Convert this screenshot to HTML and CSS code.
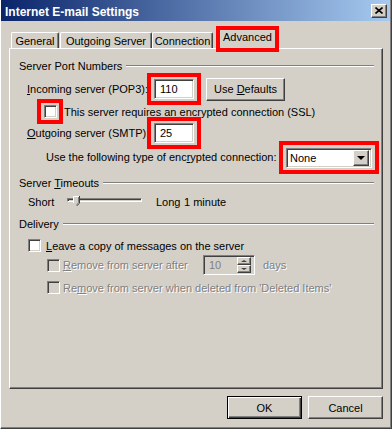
FILE: index.html
```html
<!DOCTYPE html>
<html lang="en">
<head>
    <meta charset="UTF-8">
    <title>Internet E-mail Settings</title>
    <link rel="stylesheet" href="styles.css">
</head>
<body>
    <div class="window">
        <div class="titlebar">
            <span class="title">Internet E-mail Settings</span>
            <button class="btn close-btn">
                <svg width="8" height="7" viewBox="0 0 8 7"><path d="M0.5 0.5 L7.5 6.5 M7.5 0.5 L0.5 6.5" stroke="#000" stroke-width="1.6" fill="none"/></svg>
            </button>
        </div>
        <div class="dialog">
            <div class="tabs">
                <div class="tab tab-general">General</div>
                <div class="tab tab-outgoing">Outgoing Server</div>
                <div class="tab tab-connection">Connection</div>
                <div class="tab tab-active">Advanced</div>
            </div>
            <div class="panel">
                <div class="group-head"><span>Server Port Numbers</span><span class="rule"></span></div>

                <div class="row row-port row-incoming">
                    <span class="lbl lbl-port"><u>I</u>ncoming server (POP3):</span>
                    <span class="mark mark-field"><span class="field">110</span></span>
                    <button class="btn btn-defaults"><span>Use <u>D</u>efaults</span></button>
                </div>

                <div class="row row-ssl">
                    <span class="mark mark-check"><span class="check"></span></span>
                    <span class="ssl-text">This server requires an encrypted connection (SSL)</span>
                </div>

                <div class="row row-port row-outgoing">
                    <span class="lbl lbl-port"><u>O</u>utgoing server (SMTP):</span>
                    <span class="mark mark-field"><span class="field">25</span></span>
                </div>

                <div class="row row-encrypt">
                    <span class="lbl lbl-encrypt">Use the following type of enc<u>r</u>ypted connection:</span>
                    <span class="mark mark-select">
                        <span class="select">
                            <span class="select-value">None</span>
                            <span class="btn drop-btn"><span class="arrow-down"></span></span>
                        </span>
                    </span>
                </div>

                <div class="group-head group-timeouts"><span>Server <u>T</u>imeouts</span><span class="rule"></span></div>

                <div class="row row-slider">
                    <span class="lbl lbl-short">Short</span>
                    <span class="slider">
                        <span class="track"></span>
                        <svg class="thumb" width="7" height="10" viewBox="0 0 7 10">
                            <path d="M0 0 H6 V7 L3 10 L0 7 Z" fill="#d4d0c8"/>
                            <path d="M0.5 7 V0.5 H6" stroke="#fff" fill="none"/>
                            <path d="M6.5 0 V7.2 L3.5 10" stroke="#404040" fill="none"/>
                            <path d="M5.5 1 V6.8 L3.2 9" stroke="#808080" fill="none"/>
                        </svg>
                    </span>
                    <span class="lbl lbl-long">Long</span>
                    <span>1 minute</span>
                </div>

                <div class="group-head group-delivery"><span>Delivery</span><span class="rule"></span></div>

                <div class="row row-leave">
                    <span class="check"></span>
                    <span class="leave-text"><u>L</u>eave a copy of messages on the server</span>
                </div>

                <div class="row row-sub row-after">
                    <span class="check disabled"></span>
                    <span class="lbl lbl-after disabled-text"><u>R</u>emove from server after</span>
                    <span class="spin">
                        <span class="spin-value">10</span>
                        <span class="spin-btns">
                            <span class="btn spin-btn"><span class="arrow-up"></span></span>
                            <span class="btn spin-btn"><span class="arrow-down small"></span></span>
                        </span>
                    </span>
                    <span class="days disabled-text">days</span>
                </div>

                <div class="row row-sub row-deleted">
                    <span class="check disabled"></span>
                    <span class="sub-text disabled-text">Re<u>m</u>ove from server when deleted from 'Deleted Items'</span>
                </div>
            </div>
            <div class="buttons">
                <button class="btn btn-ok">OK</button>
                <button class="btn btn-cancel">Cancel</button>
            </div>
        </div>
    </div>
</body>
</html>
```

FILE: styles.css
```css
* {
    box-sizing: border-box;
}
body {
    margin: 0;
    background-color: #d4d0c8;
    font-family: "Liberation Sans", Arial, sans-serif;
    font-size: 11px;
    color: #000;
}
u {
    text-decoration: underline;
    text-underline-offset: 1px;
}

/* window frame */
.window {
    width: 392px;
    height: 429px;
    display: flex;
    flex-direction: column;
    border-style: solid;
    border-width: 0 1px 1px 1px;
    border-color: #404040;
    border-left-color: #fff;
    padding: 0 1px 1px 0;
    box-shadow: inset -1px -1px #808080;
}
.titlebar {
    height: 21px;
    display: flex;
    align-items: center;
    padding: 0 3px 0 4px;
    background: linear-gradient(to right, #0a246a, #a6caf0);
    color: #fff;
}
.title {
    font-weight: bold;
    font-size: 12px;
    padding-top: 2px;
}

/* classic 3D button */
.btn {
    background-color: #d4d0c8;
    border: 1px solid;
    border-color: #fff #404040 #404040 #fff;
    box-shadow: inset -1px -1px #808080;
    font: inherit;
    color: #000;
    padding: 0;
    display: flex;
    align-items: center;
    justify-content: center;
    flex-shrink: 0;
}
.close-btn {
    margin-left: auto;
    width: 16px;
    height: 14px;
}

.dialog {
    flex: 1;
    display: flex;
    flex-direction: column;
    padding: 5px 7px 0 8px;
}

/* tabs */
.tabs {
    display: flex;
    align-items: flex-end;
    height: 22px;
    padding-left: 2px;
}
.tab {
    height: 16px;
    border: 1px solid;
    border-bottom: 0;
    border-color: #fff #404040 #fff #fff;
    border-radius: 2px 2px 0 0;
    box-shadow: inset -1px 0 #808080;
    display: flex;
    align-items: center;
    justify-content: center;
    padding-top: 1px;
    white-space: nowrap;
    flex-shrink: 0;
}
.tab-general {
    width: 48px;
    margin-right: 1px;
}
.tab-outgoing {
    width: 92px;
}
.tab-connection {
    width: 61px;
    margin-right: 3px;
}
.tab-active {
    width: 63px;
    height: 26px;
    margin-bottom: -4px;
    border: 4px solid #f00;
    border-radius: 0;
    box-shadow: none;
    background-color: #d4d0c8;
    position: relative;
    z-index: 1;
    padding: 0 0 4px 0;
}

/* tab page */
.panel {
    height: 341px;
    border: 1px solid;
    border-color: #fff #404040 #404040 #fff;
    box-shadow: inset -1px -1px #808080;
    padding-top: 10px;
}
.group-head {
    height: 13px;
    display: flex;
    align-items: center;
    padding: 0 8px 0 9px;
    white-space: nowrap;
}
.rule {
    flex: 1;
    height: 2px;
    margin-left: 4px;
    border-top: 1px solid #808080;
    border-bottom: 1px solid #fff;
}
.group-timeouts {
    margin-top: 9px;
}
.group-delivery {
    margin-top: 8px;
}

.row {
    display: flex;
    align-items: center;
}
.row > span {
    white-space: nowrap;
    flex-shrink: 0;
}
.row-port {
    height: 20px;
    padding-left: 17px;
}
.row-incoming {
    margin-top: 7px;
}
.row-outgoing {
    margin-top: 5px;
}
.lbl-port {
    width: 120px;
}
.row-ssl {
    margin-top: 6px;
    height: 13px;
    padding-left: 27px;
}
.ssl-text {
    margin-left: 1px;
}
.row-encrypt {
    margin-top: 4px;
    height: 20px;
    padding-left: 36px;
}
.lbl-encrypt {
    width: 233px;
}

/* red highlight boxes */
.mark {
    display: flex;
    border: 4px solid #f00;
}
.mark-field {
    padding: 2px 3px;
}
.mark-check {
    padding: 2px 2px 2px 3px;
}
.mark-select {
    padding: 3px 3px 2px 3px;
}

/* sunken controls */
.field,
.select,
.spin,
.check {
    background-color: #fff;
    border: 1px solid;
    border-color: #808080 #fff #fff #808080;
    box-shadow: inset 1px 1px #404040, inset -1px -1px #d4d0c8;
}
.field {
    width: 40px;
    height: 20px;
    line-height: 18px;
    padding-left: 5px;
}
.btn-defaults {
    margin-left: 5px;
    width: 79px;
    height: 23px;
    white-space: nowrap;
}
.select {
    width: 86px;
    height: 20px;
    display: flex;
    align-items: center;
    padding: 2px;
}
.select-value {
    flex: 1;
    padding-left: 1px;
}
.drop-btn {
    width: 16px;
    height: 16px;
}
.arrow-down {
    width: 0;
    height: 0;
    border-left: 4px solid transparent;
    border-right: 4px solid transparent;
    border-top: 4px solid #000;
}
.arrow-down.small {
    border-left-width: 3px;
    border-right-width: 3px;
    border-top: 2px solid #404040;
}
.arrow-up {
    width: 0;
    height: 0;
    border-left: 3px solid transparent;
    border-right: 3px solid transparent;
    border-bottom: 2px solid #404040;
}

/* slider */
.row-slider {
    margin-top: 6px;
    height: 14px;
    padding-left: 18px;
}
.lbl-short {
    width: 39px;
}
.slider {
    width: 75px;
    height: 14px;
    position: relative;
    padding-top: 3px;
}
.track {
    display: block;
    height: 4px;
    border: 1px solid;
    border-color: #808080 #fff #fff #808080;
    box-shadow: inset 1px 1px #404040;
}
.thumb {
    position: absolute;
    left: 6px;
    top: 1px;
}
.row > .lbl-long {
    width: 26px;
    margin-left: 14px;
    margin-right: 2px;
}

/* delivery */
.check {
    width: 13px;
    height: 13px;
    flex-shrink: 0;
}
.check.disabled {
    background-color: #d4d0c8;
}
.row-leave {
    margin-top: 9px;
    height: 13px;
    padding-left: 18px;
}
.leave-text {
    margin-left: 5px;
}
.row-sub {
    padding-left: 37px;
}
.row-after {
    margin-top: 3px;
    height: 20px;
}
.row-deleted {
    margin-top: 6px;
    height: 13px;
}
.disabled-text {
    color: #808080;
    text-shadow: 1px 1px #fff;
}
.lbl-after {
    width: 140px;
    margin-left: 3px;
}
.sub-text {
    margin-left: 3px;
}
.spin {
    width: 52px;
    height: 20px;
    background-color: #d4d0c8;
    display: flex;
    align-items: center;
    padding: 2px 3px 2px 2px;
}
.spin-value {
    flex: 1;
    padding-left: 3px;
    color: #808080;
}
.spin-btns {
    display: flex;
    flex-direction: column;
}
.spin-btn {
    width: 14px;
    height: 8px;
}
.days {
    margin-left: 8px;
}

/* bottom buttons */
.buttons {
    display: flex;
    justify-content: flex-end;
    gap: 6px;
    margin-top: 7px;
}
.buttons .btn {
    width: 75px;
    height: 23px;
}
.btn-ok {
    border-color: #000;
    box-shadow: inset 1px 1px #fff, inset -1px -1px #404040, inset -2px -2px #808080;
}
```
